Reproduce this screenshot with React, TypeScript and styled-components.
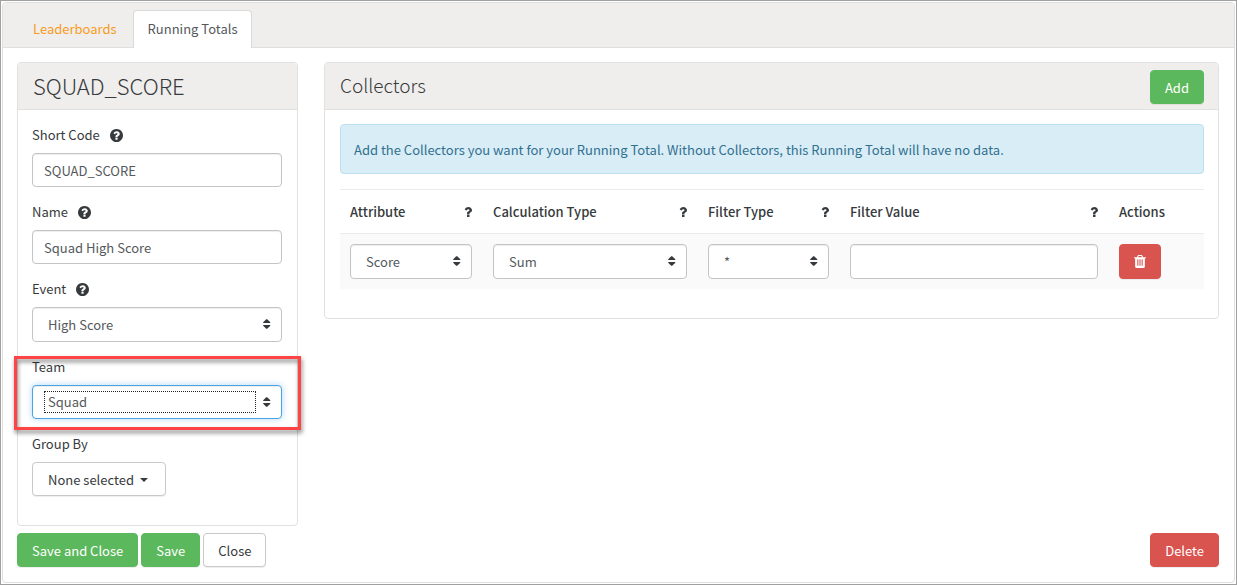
import React from "react";
import styled, { createGlobalStyle, css } from "styled-components";

const Global = createGlobalStyle`
  *, *::before, *::after { box-sizing: border-box; }
  body {
    margin: 0;
    background: #fff;
    color: #373a3c;
    font-family: "Source Sans Pro", "Noto Sans CJK SC", "Liberation Sans", sans-serif;
    font-size: 13px;
    line-height: 20px;
  }
  button, input, select { font: inherit; color: inherit; margin: 0; }
`;

const Frame = styled.div`
  min-height: 100vh;
  display: flex;
  padding: 1px;
  border: 1px solid #a0a0a0;
`;

const Page = styled.div`
  flex: 1;
  min-width: 0;
  border: 1px solid #dfdfdf;
  border-radius: 4px;
`;

const Tabs = styled.nav`
  display: flex;
  align-items: flex-end;
  height: 45px;
  padding: 0 14px;
  background: #efeeed;
  border-bottom: 1px solid #dfdfdf;
  border-radius: 4px 4px 0 0;
`;

const Tab = styled.a<{ $active?: boolean }>`
  height: 38px;
  margin-bottom: -1px;
  padding: 8px 15px;
  border: 1px solid transparent;
  border-bottom: 0;
  border-radius: 4px 4px 0 0;
  color: #f99b1d;
  text-decoration: none;
  white-space: nowrap;
  ${(p) => p.$active && css`
    padding: 8px 14px;
    color: #55595c;
    background: #fff;
    border-color: #d9d9d9;
  `}
`;

const Content = styled.main`
  padding: 14px 15px 14px 14px;
`;

const Columns = styled.div`
  display: grid;
  grid-template-columns: minmax(0, 281fr) minmax(0, 895fr);
  gap: 26px;
  align-items: start;
`;

const Panel = styled.section`
  border: 1px solid #e1e1e1;
  border-radius: 4px;
  background: #fff;
`;

const PanelHeader = styled.header`
  display: flex;
  align-items: center;
  justify-content: space-between;
  height: 47px;
  padding: 2px 14px 0 15px;
  background: #efeeed;
  border-bottom: 1px solid #e1e1e1;
  border-radius: 3px 3px 0 0;
`;

const Title = styled.h1<{ $small?: boolean }>`
  margin: 0 0 4px;
  font-size: ${(p) => (p.$small ? 19 : 22)}px;
  line-height: 32px;
  font-weight: 300;
`;

const PanelBody = styled.div`
  padding: 14px 14px 14px 15px;
`;

const FormBody = styled.div`
  padding: 15px 15px 14px 14px;
`;

const Group = styled.div`
  position: relative;
  margin-bottom: 15px;
`;

const LabelRow = styled.div`
  display: flex;
  align-items: center;
  gap: 10px;
  height: 28px;
  padding-bottom: 8px;
`;

const control = css<{ $tall?: boolean }>`
  display: block;
  width: 100%;
  height: ${(p) => (p.$tall ? 35 : 34)}px;
  background: #fff;
  border: 1px solid #c4c4c4;
  border-radius: 4px;
  color: #55595c;
  box-shadow: inset 0 1px 1px rgba(0, 0, 0, 0.07);
`;

const Input = styled.input<{ $tall?: boolean }>`
  ${control}
  padding: 0 11px;
`;

const SelectWrap = styled.div<{ $focused?: boolean }>`
  position: relative;
  svg {
    position: absolute;
    right: 11px;
    top: 12px;
    pointer-events: none;
  }
  ${(p) => p.$focused && css`
    select {
      border-color: #4ba3e3;
      box-shadow: inset 0 1px 1px rgba(0, 0, 0, 0.07), 0 0 6px rgba(102, 175, 233, 0.5);
    }
    &::after {
      content: "";
      position: absolute;
      inset: 6px 26px 6px 12px;
      border: 1px dotted #222;
      pointer-events: none;
    }
  `}
`;

const Select = styled.select<{ $tall?: boolean }>`
  ${control}
  appearance: none;
  padding: 0 28px 0 15px;
`;

const Highlight = styled.div`
  position: absolute;
  inset: -1px -19px -11px -18px;
  border: 3px solid #fe4444;
  filter: drop-shadow(1px 3px 2px rgba(0, 0, 0, 0.5));
  pointer-events: none;
`;

const tones = {
  green: css`background: #5cb85c; border-color: #5cb85c; color: #fff;`,
  red: css`background: #d9534f; border-color: #d9534f; color: #fff;`,
  plain: css`background: #fff; border-color: #c9c9c9; color: #373a3c;`,
};

const Button = styled.button<{ $tone: keyof typeof tones; $tall?: boolean }>`
  display: inline-flex;
  align-items: center;
  gap: 6px;
  height: ${(p) => (p.$tall ? 35 : 34)}px;
  padding: 2px 14px 0;
  border: 1px solid;
  border-radius: 4px;
  white-space: nowrap;
  box-shadow: 0 1px 1px rgba(0, 0, 0, 0.07);
  ${(p) => tones[p.$tone]}
`;

const DropdownButton = styled(Button)`
  padding: 2px 17px 0 15px;
`;

const IconButton = styled(Button)`
  padding: 0 14px;
`;

const Caret = styled.span`
  border: 4px solid transparent;
  border-top-color: currentColor;
  border-bottom: 0;
`;

const Alert = styled.p`
  margin: 0 0 15px;
  padding: 15px 13px 13px;
  background: #d9edf7;
  border: 1px solid #bce0f0;
  border-radius: 4px;
  color: #31708f;
`;

const Table = styled.table`
  width: 100%;
  margin-bottom: 15px;
  border-collapse: collapse;
  table-layout: fixed;
`;

const Col = styled.col<{ $w?: number }>`
  ${(p) => p.$w && `width: ${p.$w}px;`}
`;

const Th = styled.th`
  height: 44px;
  padding: 1px 11px 0 10px;
  border-top: 1px solid #ebebeb;
  border-bottom: 1px solid #ebebeb;
  text-align: left;
  font-weight: 500;
`;

const HeadCell = styled.div`
  display: flex;
  align-items: center;
  justify-content: space-between;
`;

const Td = styled.td`
  padding: 10px 11px 10px 10px;
  background: #fafafa;
`;

const Footer = styled.footer`
  display: flex;
  gap: 3px;
  padding-top: 7px;
  & > :last-child { margin-left: auto; }
`;

const HelpIcon = () => (
  <svg width="13" height="13" viewBox="128 128 1536 1536" fill="currentColor" aria-hidden="true">
    <path d="M1024 1376v-192q0-14-9-23t-23-9h-192q-14 0-23 9t-9 23v192q0 14 9 23t23 9h192q14 0 23-9t9-23zm256-672q0-88-55.5-163t-138.5-116-170-41q-243 0-371 213-15 24 8 42l132 100q7 6 19 6 16 0 25-12 53-68 86-92 34-24 86-24 48 0 85.5 26t37.5 59q0 38-20 61t-68 45q-63 28-115.5 86.5t-52.5 125.5v36q0 14 9 23t23 9h192q14 0 23-9t9-23q0-19 21.5-49.5t54.5-49.5q32-18 49-28.5t46-35 44.5-48 28-60.5 12.5-81zm384 192q0 209-103 385.5t-279.5 279.5-385.5 103-385.5-103-279.5-279.5-103-385.5 103-385.5 279.5-279.5 385.5-103 385.5 103 279.5 279.5 103 385.5z" />
  </svg>
);

const QuestionIcon = () => (
  <svg width="8" height="14" viewBox="384 0 1024 1792" fill="currentColor" aria-hidden="true">
    <path d="M1088 1256v240q0 16-12 28t-28 12h-240q-16 0-28-12t-12-28v-240q0-16 12-28t28-12h240q16 0 28 12t12 28zm316-600q0 54-15.5 101t-35 76.5-55 59.5-57.5 43.5-61 35.5q-41 23-68.5 65t-27.5 67q0 17-12 32.5t-28 15.5h-240q-15 0-25.5-18.5t-10.5-37.5v-45q0-83 65-156.5t143-108.5q59-27 84-56t25-76q0-42-46.5-74t-107.5-32q-65 0-108 29-35 25-107 115-13 16-31 16-12 0-25-8l-164-125q-13-10-15.5-25t5.5-28q160-266 464-266 80 0 161 31t146 83 106 127.5 41 158.5z" />
  </svg>
);

const TrashIcon = () => (
  <svg width="12" height="13" viewBox="192 128 1408 1536" fill="currentColor" aria-hidden="true">
    <path d="M704 1376v-704q0-14-9-23t-23-9h-64q-14 0-23 9t-9 23v704q0 14 9 23t23 9h64q14 0 23-9t9-23zm256 0v-704q0-14-9-23t-23-9h-64q-14 0-23 9t-9 23v704q0 14 9 23t23 9h64q14 0 23-9t9-23zm256 0v-704q0-14-9-23t-23-9h-64q-14 0-23 9t-9 23v704q0 14 9 23t23 9h64q14 0 23-9t9-23zm-544-992h448l-48-117q-7-9-17-11h-317q-10 2-17 11zm928 32v64q0 14-9 23t-23 9h-96v948q0 83-47 143.5t-113 60.5h-832q-66 0-113-58.5t-47-141.5v-952h-96q-14 0-23-9t-9-23v-64q0-14 9-23t23-9h309l70-167q15-37 54-63t79-26h320q40 0 79 26t54 63l70 167h309q14 0 23 9t9 23z" />
  </svg>
);

const SortIcon = () => (
  <svg width="8" height="10" viewBox="0 0 8 10" fill="#373a3c" aria-hidden="true">
    <path d="M3.2 0.3H4.2L7.3 3.2V4.1H0.2V3.2zM0.2 5.9H7.3V6.8L4.2 9.7H3.2L0.2 6.8z" />
  </svg>
);

type SelectBoxProps = {
  id?: string;
  label?: string;
  value: string;
  focused?: boolean;
  tall?: boolean;
};

const SelectBox = ({ id, label, value, focused, tall }: SelectBoxProps) => (
  <SelectWrap $focused={focused}>
    <Select id={id} aria-label={label} defaultValue={value} $tall={tall}>
      <option>{value}</option>
    </Select>
    <SortIcon />
  </SelectWrap>
);

type FieldProps = { id: string; label: string; help?: boolean; children: React.ReactNode };

const Field = ({ id, label, help, children }: FieldProps) => (
  <Group>
    <LabelRow>
      <label htmlFor={id}>{label}</label>
      {help && <HelpIcon />}
    </LabelRow>
    {children}
  </Group>
);

const columns = [
  { name: "Attribute", width: 143, help: true },
  { name: "Calculation Type", width: 215, help: true },
  { name: "Filter Type", width: 142, help: true },
  { name: "Filter Value", help: true },
  { name: "Actions", width: 95 },
];

export default function App() {
  return (
    <>
      <Global />
      <Frame>
        <Page>
          <Tabs>
            <Tab href="#leaderboards">Leaderboards</Tab>
            <Tab href="#running-totals" $active aria-current="page">Running Totals</Tab>
          </Tabs>
          <Content>
            <Columns>
              <Panel>
                <PanelHeader>
                  <Title>SQUAD_SCORE</Title>
                </PanelHeader>
                <FormBody>
                  <Field id="short-code" label="Short Code" help>
                    <Input id="short-code" defaultValue="SQUAD_SCORE" />
                  </Field>
                  <Field id="name" label="Name" help>
                    <Input id="name" defaultValue="Squad High Score" />
                  </Field>
                  <Field id="event" label="Event" help>
                    <SelectBox id="event" value="High Score" tall />
                  </Field>
                  <Field id="team" label="Team">
                    <SelectBox id="team" value="Squad" focused />
                    <Highlight />
                  </Field>
                  <Field id="group-by" label="Group By">
                    <DropdownButton id="group-by" type="button" $tone="plain">
                      None selected <Caret />
                    </DropdownButton>
                  </Field>
                </FormBody>
              </Panel>
              <Panel>
                <PanelHeader>
                  <Title as="h2" $small>Collectors</Title>
                  <Button type="button" $tone="green">Add</Button>
                </PanelHeader>
                <PanelBody>
                  <Alert>
                    Add the Collectors you want for your Running Total. Without Collectors, this Running Total will have no data.
                  </Alert>
                  <Table>
                    <colgroup>
                      {columns.map((c) => <Col key={c.name} $w={c.width} />)}
                    </colgroup>
                    <thead>
                      <tr>
                        {columns.map((c) => (
                          <Th key={c.name} scope="col">
                            <HeadCell>
                              {c.name}
                              {c.help && <QuestionIcon />}
                            </HeadCell>
                          </Th>
                        ))}
                      </tr>
                    </thead>
                    <tbody>
                      <tr>
                        <Td><SelectBox label="Attribute" value="Score" tall /></Td>
                        <Td><SelectBox label="Calculation Type" value="Sum" tall /></Td>
                        <Td><SelectBox label="Filter Type" value="*" tall /></Td>
                        <Td><Input $tall aria-label="Filter Value" /></Td>
                        <Td>
                          <IconButton type="button" $tone="red" $tall aria-label="Delete collector">
                            <TrashIcon />
                          </IconButton>
                        </Td>
                      </tr>
                    </tbody>
                  </Table>
                </PanelBody>
              </Panel>
            </Columns>
            <Footer>
              <Button type="button" $tone="green">Save and Close</Button>
              <Button type="button" $tone="green">Save</Button>
              <Button type="button" $tone="plain">Close</Button>
              <Button type="button" $tone="red">Delete</Button>
            </Footer>
          </Content>
        </Page>
      </Frame>
    </>
  );
}
